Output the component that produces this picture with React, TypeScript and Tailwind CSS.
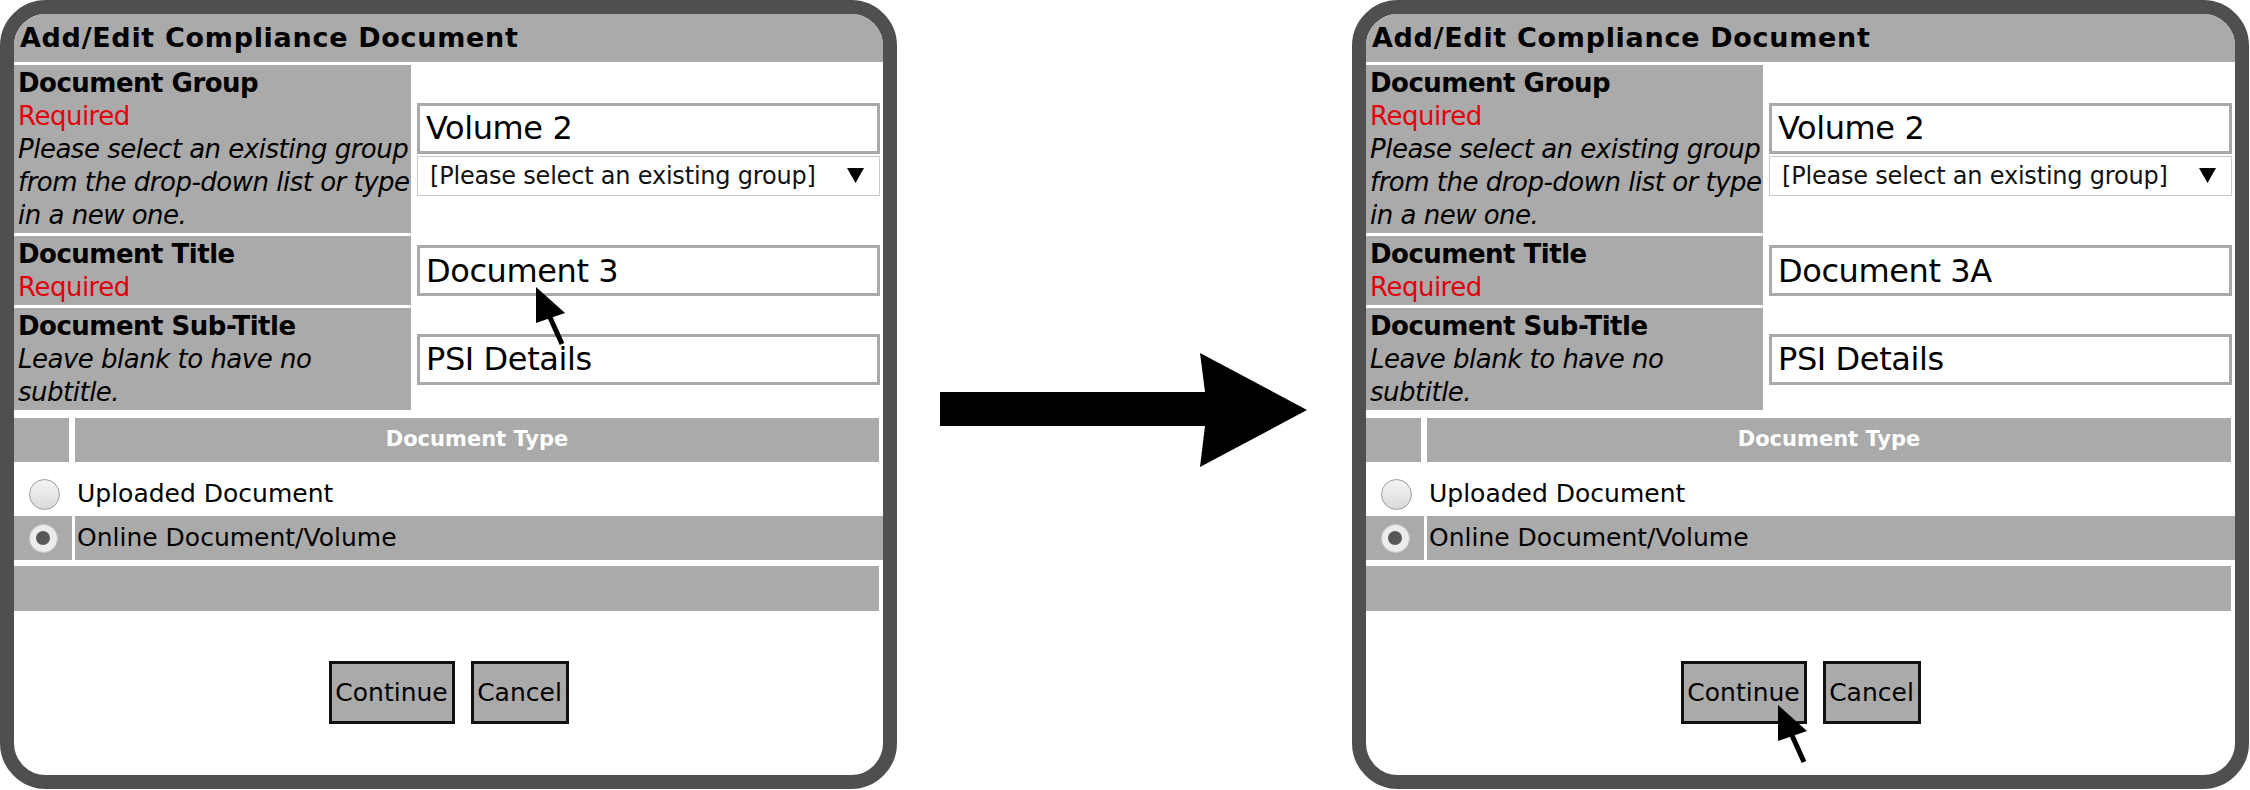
const FONT = "font-['DejaVu_Sans',sans-serif]"

function Radio({ checked }: { checked?: boolean }) {
  if (checked) {
    return (
      <div className="w-[29px] h-[29px] rounded-full bg-[#ececec] border border-[#c4c4c4] flex items-center justify-center">
        <div className="w-[14px] h-[14px] rounded-full bg-[#575757]" />
      </div>
    )
  }
  return <div className="w-[31px] h-[31px] rounded-full border border-[#9c9c9c] bg-gradient-to-b from-[#f4f4f4] to-[#dadada]" />
}

function Cursor({ pos }: { pos: string }) {
  return (
    <svg className={`absolute ${pos}`} width="32" height="60" viewBox="0 0 32 60">
      <polygon points="0,0 0,36 29,26" fill="#000" />
      <line x1="12" y1="26" x2="26" y2="57" stroke="#000" strokeWidth="5" />
    </svg>
  )
}

function Field({ children }: { children: React.ReactNode }) {
  return (
    <div className="h-[51px] border-[3px] border-[#a9a9a9] bg-white flex items-center pl-[6px] text-[32px] tracking-[-0.4px] text-black leading-none">
      {children}
    </div>
  )
}

function Label({ title, required, note }: { title: string; required?: boolean; note?: string[] }) {
  return (
    <div className="w-[397px] shrink-0 bg-[#aaaaaa] pl-[4px] pt-[2px] pb-[1px] text-[26px] leading-[33px] tracking-[-0.5px] text-black">
      <div className="font-bold">{title}</div>
      {required && <div className="text-[#e4000f]">Required</div>}
      {note && note.map((l) => (
        <div key={l} className="italic">{l}</div>
      ))}
    </div>
  )
}

function Panel({ docTitle, cursor }: { docTitle: string; cursor: string }) {
  return (
    <div className={`relative w-[897px] h-[789px] shrink-0 border-[14px] border-[#4f4f4f] rounded-[46px] overflow-hidden bg-white flex flex-col ${FONT}`}>
      <div className="h-[48px] bg-[#aaaaaa] flex items-center pl-[6px] text-[27px] font-bold tracking-[0.7px] text-black">
        Add/Edit Compliance Document
      </div>

      <div className="mt-[3px] flex flex-col gap-[3px]">
        {/* Document Group */}
        <div className="flex">
          <Label
            title="Document Group"
            required
            note={['Please select an existing group', 'from the drop-down list or type', 'in a new one.']}
          />
          <div className="flex-1 flex flex-col justify-center pl-[6px] pr-[3px] gap-[2px]">
            <Field>Volume 2</Field>
            <div className="h-[40px] border border-[#c8c8c8] bg-white flex items-center justify-between pl-[12px] pr-[15px] text-[24px] tracking-[-0.2px] text-[#111]">
              <span>[Please select an existing group]</span>
              <svg width="17" height="15" viewBox="0 0 17 15">
                <polygon points="0,0 17,0 8.5,15" fill="#000" />
              </svg>
            </div>
          </div>
        </div>

        {/* Document Title */}
        <div className="flex">
          <Label title="Document Title" required />
          <div className="flex-1 flex flex-col justify-center pl-[6px] pr-[3px]">
            <Field>{docTitle}</Field>
          </div>
        </div>

        {/* Document Sub-Title */}
        <div className="flex">
          <Label title="Document Sub-Title" note={['Leave blank to have no', 'subtitle.']} />
          <div className="flex-1 flex flex-col justify-center pl-[6px] pr-[3px]">
            <Field>PSI Details</Field>
          </div>
        </div>
      </div>

      {/* Document Type */}
      <div className="mt-[8px] h-[44px] flex gap-[6px] mr-[4px]">
        <div className="w-[55px] bg-[#aaaaaa]" />
        <div className="flex-1 bg-[#aaaaaa] flex items-center justify-center text-white font-bold text-[21px]">
          Document Type
        </div>
      </div>

      <div className="h-[54px] pt-[10px] flex items-center text-[25px] text-black">
        <div className="w-[61px] flex justify-center">
          <Radio />
        </div>
        <div className="pl-[2px]">Uploaded Document</div>
      </div>

      <div className="h-[44px] flex gap-[3px]">
        <div className="w-[58px] bg-[#aaaaaa] flex items-center justify-center">
          <Radio checked />
        </div>
        <div className="flex-1 bg-[#aaaaaa] flex items-center pl-[2px] text-[25px] text-black">
          Online Document/Volume
        </div>
      </div>

      <div className="mt-[6px] h-[45px] bg-[#aaaaaa] mr-[4px]" />

      <div className="mt-[50px] flex justify-center gap-[16px] text-[25px] text-black">
        <div className="w-[126px] h-[63px] border-[3px] border-[#111] bg-[#aaaaaa] flex items-center justify-center">
          Continue
        </div>
        <div className="w-[98px] h-[63px] border-[3px] border-[#111] bg-[#aaaaaa] flex items-center justify-center">
          Cancel
        </div>
      </div>

      <Cursor pos={cursor} />
    </div>
  )
}

export default function App() {
  return (
    <div className="w-[2250px] h-[790px] bg-white flex items-start overflow-hidden">
      <Panel docTitle="Document 3" cursor="left-[522px] top-[273px]" />

      <div className="w-[455px] shrink-0 pt-[353px] pl-[43px]">
        <svg width="368" height="115" viewBox="0 0 368 115">
          <polygon points="0,39 265,39 260,0 367,57 260,114 265,73 0,73" fill="#000" />
        </svg>
      </div>

      <Panel docTitle="Document 3A" cursor="left-[412px] top-[691px]" />
    </div>
  )
}
